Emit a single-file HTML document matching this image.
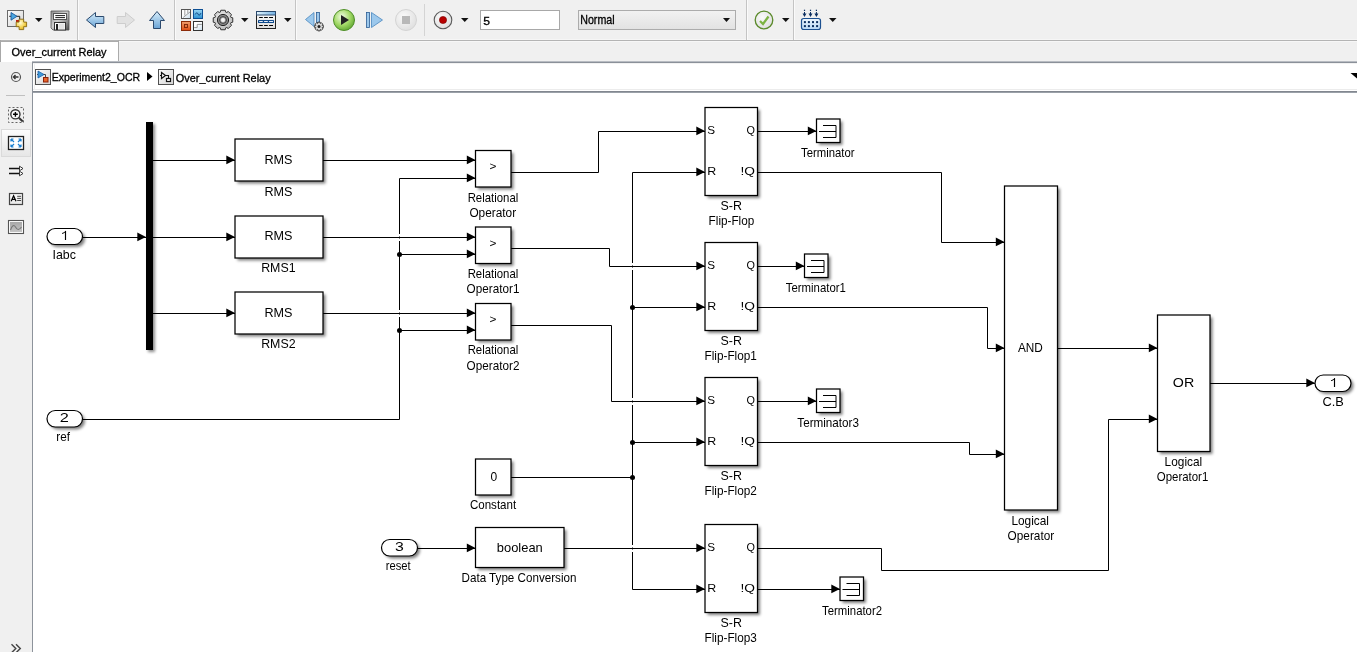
<!DOCTYPE html>
<html><head><meta charset="utf-8"><style>
html,body{margin:0;padding:0;width:1357px;height:652px;overflow:hidden;background:#f0f0f0;}
svg{display:block;font-family:"Liberation Sans", sans-serif;will-change:transform;}
</style></head><body>
<svg width="1357" height="652" viewBox="0 0 1357 652" font-family='"Liberation Sans", sans-serif'>
<defs><filter id="sh" x="-50%" y="-50%" width="200%" height="200%"><feGaussianBlur stdDeviation="1.6"/></filter></defs>
<rect x="0" y="0" width="1357" height="652" fill="#f0f0f0"/>
<rect x="0" y="39" width="1357" height="1" fill="#f6f6f6"/>
<rect x="0" y="40" width="1357" height="1" fill="#b4b4b4"/>
<rect x="0" y="41" width="1357" height="1" fill="#f7f7f7"/>
<rect x="77" y="0" width="1" height="40" fill="#c4c4c4"/>
<rect x="78" y="0" width="1" height="40" fill="#fafafa"/>
<rect x="174" y="0" width="1" height="40" fill="#c4c4c4"/>
<rect x="175" y="0" width="1" height="40" fill="#fafafa"/>
<rect x="295" y="0" width="1" height="40" fill="#c4c4c4"/>
<rect x="296" y="0" width="1" height="40" fill="#fafafa"/>
<rect x="746" y="0" width="1" height="40" fill="#c4c4c4"/>
<rect x="747" y="0" width="1" height="40" fill="#fafafa"/>
<rect x="793" y="0" width="1" height="40" fill="#c4c4c4"/>
<rect x="794" y="0" width="1" height="40" fill="#fafafa"/>
<rect x="424" y="4" width="1" height="32" fill="#d4d4d4"/>
<rect x="0" y="41" width="119" height="1" fill="#ababab"/>
<rect x="1" y="42" width="117" height="20" fill="#fff"/>
<rect x="0" y="40" width="1" height="22" fill="#a8a8a8"/>
<rect x="118" y="40" width="1" height="22" fill="#ababab"/>
<text transform="matrix(0.9968,0,0,1,11.60,56)" x="0" y="0" font-size="11" font-weight="normal" fill="#000" stroke="#000" stroke-width="0.3">Over_current Relay</text>
<rect x="32" y="61" width="1325" height="1" fill="#b8bcc2"/>
<rect x="32" y="62" width="1325" height="1" fill="#8a9099"/>
<rect x="33" y="63" width="1324" height="28" fill="#fff"/>
<rect x="33" y="63" width="1324" height="1" fill="#f2f2f2"/>
<rect x="33" y="89" width="1324" height="1" fill="#ececec"/>
<rect x="32" y="91" width="1325" height="1" fill="#82878f"/>
<rect x="32" y="92" width="1325" height="1" fill="#9aa0a8"/>
<rect x="32" y="62" width="1" height="590" fill="#8d939b"/>
<rect x="33" y="93" width="1324" height="559" fill="#fff"/>
<text transform="matrix(0.9604,0,0,1,51.64,81.3)" x="0" y="0" font-size="11" font-weight="normal" fill="#000" stroke="#000" stroke-width="0.3">Experiment2_OCR</text>
<polygon points="147,72 152.5,76.5 147,81" fill="#000"/>
<text transform="matrix(0.9947,0,0,1,175.80,81.5)" x="0" y="0" font-size="11" font-weight="normal" fill="#000" stroke="#000" stroke-width="0.3">Over_current Relay</text>
<polygon points="1350.5,73 1357,73 1357,78.5" fill="#000"/>
<rect x="35.5" y="69.5" width="15" height="15" fill="url(#nm)" stroke="#505050" stroke-width="1"/>
<rect x="158.5" y="69.5" width="15" height="15" fill="url(#nm)" stroke="#505050" stroke-width="1"/>
<path d="M37,74.5 L45.5,74.5 L45.5,77.5" stroke="#444" stroke-width="1" fill="none"/>
<polygon points="38,71 44,74.5 38,78" fill="#3e9ad8" stroke="#1c5ea8" stroke-width="0.8"/>
<rect x="43.5" y="77.5" width="4.5" height="4.5" fill="#e8642a" stroke="#8c2008" stroke-width="1"/>
<path d="M160,75.5 L168.5,75.5 L168.5,78.5" stroke="#111" stroke-width="1.1" fill="none"/>
<polygon points="161.5,72.5 165.5,75.5 161.5,78.5" fill="#fff" stroke="#111" stroke-width="1.2"/>
<rect x="166.5" y="78.5" width="4" height="3" fill="#fff" stroke="#111" stroke-width="1.2"/>
<circle cx="16" cy="77" r="4.5" fill="#f0f0f0" stroke="#555" stroke-width="1.2"/>
<path d="M13.5,77 L18.5,77 M15.5,75 L13.5,77 L15.5,79" stroke="#333" stroke-width="1.4" fill="none"/>
<rect x="6" y="95" width="19" height="1" fill="#c0c0c0"/>
<rect x="8.5" y="107.5" width="15" height="15" fill="none" stroke="#666" stroke-dasharray="2,2"/>
<circle cx="15.4" cy="114.3" r="4.6" fill="#fafafa" stroke="#333" stroke-width="1.4"/>
<path d="M13,114.3 L17.8,114.3 M15.4,111.9 L15.4,116.7" stroke="#000" stroke-width="1.4"/>
<path d="M18.8,117.7 L22.8,121.5" stroke="#333" stroke-width="2"/>
<rect x="34" y="64" width="1" height="26" fill="#efefef"/>
<defs><linearGradient id="fb" x1="0" y1="0" x2="0" y2="1"><stop offset="0" stop-color="#fdfdfd"/><stop offset="1" stop-color="#e6e6e6"/></linearGradient><linearGradient id="ib" x1="0" y1="0" x2="0" y2="1"><stop offset="0" stop-color="#a8a8a8"/><stop offset="1" stop-color="#c4c4c4"/></linearGradient></defs>
<rect x="1.5" y="129.5" width="29" height="27" fill="url(#fb)" stroke="#dadada" stroke-width="1"/>
<rect x="8.5" y="136.5" width="15" height="13" fill="#fff" stroke="#222" stroke-width="1.3"/>
<path d="M11,139 L14,142 M11,139 L11,141.5 M11,139 L13.5,139 M21,139 L18,142 M21,139 L21,141.5 M21,139 L18.5,139 M11,147 L14,144 M11,147 L11,144.5 M11,147 L13.5,147 M21,147 L18,144 M21,147 L21,144.5 M21,147 L18.5,147" stroke="#1a7fd0" stroke-width="1.2" fill="none"/>
<path d="M9,168.5 L19.5,168.5 M9,173.5 L19.5,173.5" stroke="#111" stroke-width="1.3" fill="none"/>
<path d="M19.5,166.2 L23,168.5 L19.5,170.8 Z M19.5,171.2 L23,173.5 L19.5,175.8 Z" stroke="#222" stroke-width="0.9" fill="#fff"/>
<rect x="9.5" y="193.5" width="13" height="11" fill="url(#fb)" stroke="#444" stroke-width="1.2"/>
<path d="M11.2,201.2 L13.6,195.8 L16,201.2 M12.2,199.4 L15,199.4" stroke="#000" stroke-width="1.2" fill="none"/>
<path d="M17.2,196.3 L21.1,196.3 M17.2,198.4 L21.1,198.4 M17.2,200.5 L21.1,200.5" stroke="#333" stroke-width="0.9"/>
<rect x="8.5" y="220.5" width="15" height="13" fill="#fff" stroke="#555" stroke-width="1.1"/>
<rect x="10" y="222" width="12" height="10" fill="url(#ib)"/>
<path d="M10.5,230 Q13,223 15.5,227 Q18,232 21.5,227" stroke="#777" stroke-width="1.1" fill="none"/>
<path d="M11.5,644.2 L15.8,648.5 L11.5,652.8 M16,644.2 L20.3,648.5 L16,652.8" stroke="#444" stroke-width="1.4" fill="none"/>
<defs><linearGradient id="nm" x1="0" y1="0" x2="1" y2="1"><stop offset="0" stop-color="#fdfdfd"/><stop offset="1" stop-color="#d4d4d4"/></linearGradient><radialGradient id="yl" cx="40%" cy="35%" r="70%"><stop offset="0" stop-color="#fffbd8"/><stop offset="0.6" stop-color="#f4d455"/><stop offset="1" stop-color="#d9a820"/></radialGradient><linearGradient id="sv" x1="0" y1="0" x2="1" y2="1"><stop offset="0" stop-color="#8c8c8c"/><stop offset="0.45" stop-color="#cfcfcf"/><stop offset="1" stop-color="#4a4a4a"/></linearGradient><radialGradient id="gg" cx="45%" cy="40%" r="65%"><stop offset="0" stop-color="#f6f6f6"/><stop offset="1" stop-color="#b4b4b4"/></radialGradient></defs>
<rect x="7.5" y="10.5" width="16" height="16" fill="url(#nm)" stroke="#6a6a6a" stroke-width="1"/>
<path d="M9.2,16.3 L19.7,16.3 L19.7,19" stroke="#222" stroke-width="1" fill="none"/>
<polygon points="11,12.5 17,16.3 11,20.2" fill="#4aa6e0" stroke="#1d5a9a" stroke-width="0.9"/>
<rect x="16" y="20" width="3" height="2" fill="#c02010"/>
<path d="M19.1,19.2 h4.6 v2.9 h2.9 v4.6 h-2.9 v2.9 h-4.6 v-2.9 h-2.9 v-4.6 h2.9 z" fill="url(#yl)" stroke="#8a6a10" stroke-width="0.9"/>
<polygon points="35,18 42.5,18 38.75,22" fill="#111"/>
<path d="M51,11 L69,11 L69,30 L53,30 L51,28 Z" fill="url(#sv)" stroke="#505050" stroke-width="0.8"/>
<rect x="53.5" y="13.5" width="13" height="6" fill="#fff" stroke="#555" stroke-width="1"/>
<path d="M55.3,15.6 L65,15.6 M55.3,17.6 L65,17.6" stroke="#000" stroke-width="0.9"/>
<rect x="54.5" y="22.5" width="11" height="7.5" fill="#fff" stroke="#333" stroke-width="1"/>
<rect x="58.5" y="23.5" width="6" height="5.5" fill="#e2e2e2"/>
<rect x="56" y="24" width="2" height="6" fill="#222"/>
<defs><linearGradient id="ab" x1="0" y1="0" x2="0" y2="1"><stop offset="0" stop-color="#d8eefb"/><stop offset="1" stop-color="#6aa4d6"/></linearGradient><linearGradient id="ah" x1="0" y1="0" x2="1" y2="0"><stop offset="0" stop-color="#d8eefb"/><stop offset="1" stop-color="#7ab2de"/></linearGradient></defs>
<path d="M86.5,20 L95.5,12.5 L95.5,16.5 L103.8,16.5 L103.8,23.5 L95.5,23.5 L95.5,27.5 Z" fill="url(#ab)" stroke="#2c4a6e" stroke-width="1"/>
<path d="M134.5,20 L125.5,12.5 L125.5,16.5 L117.2,16.5 L117.2,23.5 L125.5,23.5 L125.5,27.5 Z" fill="#e2e2e2" stroke="#cdcdcd" stroke-width="1"/>
<path d="M157,11.5 L164.5,20.5 L160.5,20.5 L160.5,28.5 L153.5,28.5 L153.5,20.5 L149.5,20.5 Z" fill="url(#ab)" stroke="#2c4a6e" stroke-width="1"/>
<defs><linearGradient id="l1" x1="0" y1="0" x2="1" y2="1"><stop offset="0.4" stop-color="#ffffff"/><stop offset="1" stop-color="#c8dcec"/></linearGradient><linearGradient id="l2" x1="0" y1="0" x2="0" y2="1"><stop offset="0" stop-color="#9ad6f4"/><stop offset="1" stop-color="#2a8fd0"/></linearGradient><linearGradient id="l3" x1="0" y1="0" x2="0" y2="1"><stop offset="0" stop-color="#f0a070"/><stop offset="1" stop-color="#e04c12"/></linearGradient></defs>
<rect x="181.5" y="9.5" width="9" height="9" fill="url(#l1)" stroke="#555" stroke-width="1"/>
<path d="M183.2,17.5 L190,12 M184.8,10 L184.8,15.5 M187.8,10 L187.8,13.3" stroke="#888" stroke-width="0.8"/>
<rect x="193.5" y="9.5" width="9" height="9" fill="url(#l2)" stroke="#0d4f94" stroke-width="1"/>
<path d="M195.2,14.5 Q196.5,11.5 197.8,13.5 Q199,17 200.5,13.8 L201,13" stroke="#0b3f7a" stroke-width="0.9" fill="none"/>
<rect x="181.5" y="21.5" width="9" height="9" fill="url(#l3)" stroke="#8c2c0a" stroke-width="1"/>
<rect x="184.5" y="24.5" width="3" height="3" fill="none" stroke="#7a2206" stroke-width="0.9"/>
<rect x="193.5" y="21.5" width="9" height="9" fill="url(#l1)" stroke="#333" stroke-width="1"/>
<path d="M194.2,27.6 L197.2,27.6 L197.2,24.4 L201.8,24.4" stroke="#888" stroke-width="0.9" fill="none"/>
<polygon points="220.11,12.33 220.82,10.24 225.18,10.24 225.89,12.33 226.38,12.53 228.36,11.56 231.44,14.64 230.47,16.62 230.67,17.11 232.76,17.82 232.76,22.18 230.67,22.89 230.47,23.38 231.44,25.36 228.36,28.44 226.38,27.47 225.89,27.67 225.18,29.76 220.82,29.76 220.11,27.67 219.62,27.47 217.64,28.44 214.56,25.36 215.53,23.38 215.33,22.89 213.24,22.18 213.24,17.82 215.33,17.11 215.53,16.62 214.56,14.64 217.64,11.56 219.62,12.53" fill="url(#gg)" stroke="#333" stroke-width="1"/>
<circle cx="223" cy="20" r="5.6" fill="#8a8a8a" stroke="#222" stroke-width="1"/>
<circle cx="223" cy="20" r="3.4" fill="#aaa" stroke="#333" stroke-width="0.9"/>
<circle cx="223" cy="20" r="2" fill="#f4f4f4"/>
<polygon points="241,18 248.5,18 244.75,22" fill="#111"/>
<defs><linearGradient id="me" x1="0" y1="0" x2="1" y2="0"><stop offset="0" stop-color="#e4f6fe"/><stop offset="1" stop-color="#74b2e4"/></linearGradient><linearGradient id="mb" x1="0" y1="0" x2="0" y2="1"><stop offset="0" stop-color="#ffffff"/><stop offset="1" stop-color="#dcdcdc"/></linearGradient></defs>
<rect x="256.5" y="11.5" width="19" height="17" fill="url(#mb)" stroke="#222" stroke-width="1"/>
<rect x="256.5" y="11.5" width="19" height="3.5" fill="url(#me)" stroke="#2c4a6e" stroke-width="1"/>
<path d="M259.2,17.5 L262.8,17.5 M264.1,17.5 L267.8,17.5 M269.1,17.5 L273,17.5 M259.2,25.5 L262.8,25.5 M264.1,25.5 L267.8,25.5 M269.1,25.5 L273,25.5" stroke="#000" stroke-width="1.1"/>
<rect x="258" y="20" width="16" height="3" rx="0.6" fill="#0f4a8c"/>
<path d="M259.2,21.5 L262.8,21.5 M264.1,21.5 L267.8,21.5 M269.1,21.5 L273,21.5" stroke="#e6eef8" stroke-width="1"/>
<polygon points="284,18 291.5,18 287.75,22" fill="#111"/>
<polygon points="305.5,19.5 314,12.5 314,26.5" fill="#9cc8ec" stroke="#4a86be" stroke-width="0.8"/>
<rect x="316.5" y="12.5" width="3" height="10" fill="#9cc8ec" stroke="#2c5e94" stroke-width="0.8"/>
<polygon points="317.71,23.46 317.89,22.14 320.11,22.14 320.29,23.46 320.24,23.44 321.30,22.63 322.87,24.20 322.06,25.26 322.04,25.21 323.36,25.39 323.36,27.61 322.04,27.79 322.06,27.74 322.87,28.80 321.30,30.37 320.24,29.56 320.29,29.54 320.11,30.86 317.89,30.86 317.71,29.54 317.76,29.56 316.70,30.37 315.13,28.80 315.94,27.74 315.96,27.79 314.64,27.61 314.64,25.39 315.96,25.21 315.94,25.26 315.13,24.20 316.70,22.63 317.76,23.44" fill="#d8d8d8" stroke="#333" stroke-width="0.9"/>
<circle cx="319" cy="26.5" r="1.5" fill="#222"/>
<defs><radialGradient id="gr" cx="40%" cy="35%" r="70%"><stop offset="0" stop-color="#f2fbe6"/><stop offset="0.55" stop-color="#a4da68"/><stop offset="1" stop-color="#5ea530"/></radialGradient><radialGradient id="gy" cx="40%" cy="35%" r="70%"><stop offset="0" stop-color="#fafafa"/><stop offset="1" stop-color="#dedede"/></radialGradient></defs>
<circle cx="344" cy="20" r="10.5" fill="url(#gr)" stroke="#4f8f28" stroke-width="1"/>
<polygon points="341,15 349,20 341,25" fill="#222"/>
<rect x="366.5" y="12.5" width="3" height="15" fill="#9cc8ec" stroke="#2c5e94" stroke-width="0.8"/>
<polygon points="371.5,12.5 382.5,20 371.5,27.5" fill="#9cc8ec" stroke="#4a86be" stroke-width="0.8"/>
<circle cx="406" cy="20" r="10.5" fill="url(#gy)" stroke="#d4d4d4" stroke-width="1"/>
<rect x="402" y="16" width="8" height="8" fill="#b8b8b8"/>
<circle cx="443" cy="20" r="8.8" fill="url(#gy)" stroke="#5a5a5a" stroke-width="1.1"/>
<circle cx="443" cy="20" r="3.6" fill="#b80000" stroke="#700" stroke-width="0.6"/>
<polygon points="461,18 468.5,18 464.75,22" fill="#111"/>
<rect x="480.5" y="10.5" width="79" height="19" fill="#fff" stroke="#a8a8a8" stroke-width="1"/>
<text transform="matrix(1.0600,0,0,1,483.24,24.5)" x="0" y="0" font-size="11.5" font-weight="normal" fill="#000" stroke="#000" stroke-width="0.3">5</text>
<defs><linearGradient id="cb" x1="0" y1="0" x2="0" y2="1"><stop offset="0" stop-color="#f2f2f2"/><stop offset="1" stop-color="#e2e2e2"/></linearGradient></defs>
<rect x="578.5" y="10.5" width="157" height="19" fill="url(#cb)" stroke="#acacac" stroke-width="1"/>
<text transform="matrix(0.8892,0,0,1,580.21,24.3)" x="0" y="0" font-size="12" font-weight="normal" fill="#000" stroke="#000" stroke-width="0.3">Normal</text>
<polygon points="723,18 730,18 726.5,22" fill="#111"/>
<circle cx="764" cy="20" r="8.8" fill="url(#gy)" stroke="#5a8a2a" stroke-width="1.3"/>
<path d="M760,21 L763,24 L768.5,16.5" stroke="#7cb342" stroke-width="2.2" fill="none"/>
<polygon points="782,18 789.5,18 785.75,22" fill="#111"/>
<defs><linearGradient id="lb" x1="0" y1="0" x2="0" y2="1"><stop offset="0" stop-color="#eef6fd"/><stop offset="1" stop-color="#b9d8f4"/></linearGradient></defs>
<rect x="801.5" y="18.5" width="19" height="11" rx="2.2" fill="url(#lb)" stroke="#1c5090" stroke-width="1.2"/>
<rect x="803.9" y="21.1" width="2" height="2" fill="#0d2f60"/>
<rect x="803.9" y="25.1" width="2" height="2" fill="#0d2f60"/>
<rect x="807.9" y="21.1" width="2" height="2" fill="#0d2f60"/>
<rect x="807.9" y="25.1" width="2" height="2" fill="#0d2f60"/>
<rect x="812" y="21.1" width="2" height="2" fill="#0d2f60"/>
<rect x="812" y="25.1" width="2" height="2" fill="#0d2f60"/>
<rect x="816.1" y="21.1" width="2" height="2" fill="#0d2f60"/>
<rect x="816.1" y="25.1" width="2" height="2" fill="#0d2f60"/>
<rect x="803.9" y="9.7" width="1.2" height="1.3" fill="#0d2f60"/>
<path d="M804.5,12 L804.5,15" stroke="#0d2f60" stroke-width="1"/>
<polygon points="802.5,13.6 806.5,13.6 804.5,17" fill="#0d2f60"/>
<rect x="809.9" y="9.7" width="1.2" height="1.3" fill="#0d2f60"/>
<path d="M810.5,12 L810.5,15" stroke="#0d2f60" stroke-width="1"/>
<polygon points="808.5,13.6 812.5,13.6 810.5,17" fill="#0d2f60"/>
<rect x="815.8" y="9.7" width="1.2" height="1.3" fill="#0d2f60"/>
<path d="M816.4,12 L816.4,15" stroke="#0d2f60" stroke-width="1"/>
<polygon points="814.4,13.6 818.4,13.6 816.4,17" fill="#0d2f60"/>
<polygon points="829,18 836.5,18 832.75,22" fill="#111"/>
<path d="M82.5,237.5 L146,237.5" fill="none" stroke="#000" stroke-width="1.0"/>
<polygon points="146,236.9 137.3,232.6 137.3,241.20000000000002" fill="#000"/>
<path d="M153,160.5 L235,160.5" fill="none" stroke="#000" stroke-width="1.0"/>
<polygon points="235,159.9 226.3,155.6 226.3,164.20000000000002" fill="#000"/>
<path d="M153,237.5 L235,237.5" fill="none" stroke="#000" stroke-width="1.0"/>
<polygon points="235,236.9 226.3,232.6 226.3,241.20000000000002" fill="#000"/>
<path d="M153,313.5 L235,313.5" fill="none" stroke="#000" stroke-width="1.0"/>
<polygon points="235,312.9 226.3,308.59999999999997 226.3,317.2" fill="#000"/>
<path d="M323,160.5 L475.5,160.5" fill="none" stroke="#000" stroke-width="1.0"/>
<polygon points="475.5,159.9 466.8,155.6 466.8,164.20000000000002" fill="#000"/>
<path d="M323,237.5 L475.5,237.5" fill="none" stroke="#000" stroke-width="1.0"/>
<polygon points="475.5,236.9 466.8,232.6 466.8,241.20000000000002" fill="#000"/>
<path d="M323,313.5 L475.5,313.5" fill="none" stroke="#000" stroke-width="1.0"/>
<polygon points="475.5,312.9 466.8,308.59999999999997 466.8,317.2" fill="#000"/>
<path d="M82.5,419.5 L399.5,419.5 L399.5,178.5 L475.5,178.5" fill="none" stroke="#000" stroke-width="1.0"/>
<polygon points="475.5,177.9 466.8,173.6 466.8,182.20000000000002" fill="#000"/>
<path d="M399.5,254.5 L475.5,254.5" fill="none" stroke="#000" stroke-width="1.0"/>
<polygon points="475.5,253.9 466.8,249.6 466.8,258.2" fill="#000"/>
<circle cx="399.5" cy="254.5" r="2.5" fill="#000"/>
<path d="M399.5,330.5 L475.5,330.5" fill="none" stroke="#000" stroke-width="1.0"/>
<polygon points="475.5,329.9 466.8,325.59999999999997 466.8,334.2" fill="#000"/>
<circle cx="399.5" cy="330.5" r="2.5" fill="#000"/>
<rect x="398.0" y="234.0" width="3" height="2.5" fill="#fff"/>
<rect x="398.0" y="238.5" width="3" height="2.5" fill="#fff"/>
<rect x="398.0" y="310.0" width="3" height="2.5" fill="#fff"/>
<rect x="398.0" y="314.5" width="3" height="2.5" fill="#fff"/>
<path d="M380,237.5 L420,237.5" fill="none" stroke="#000" stroke-width="1.0"/>
<path d="M380,313.5 L420,313.5" fill="none" stroke="#000" stroke-width="1.0"/>
<path d="M511,172.5 L598.5,172.5 L598.5,131.5 L705,131.5" fill="none" stroke="#000" stroke-width="1.0"/>
<polygon points="705,130.9 696.3,126.60000000000001 696.3,135.20000000000002" fill="#000"/>
<path d="M511,248.5 L609.5,248.5 L609.5,266.5 L705,266.5" fill="none" stroke="#000" stroke-width="1.0"/>
<polygon points="705,265.9 696.3,261.59999999999997 696.3,270.2" fill="#000"/>
<path d="M511,325.5 L611.5,325.5 L611.5,401.5 L705,401.5" fill="none" stroke="#000" stroke-width="1.0"/>
<polygon points="705,400.9 696.3,396.59999999999997 696.3,405.2" fill="#000"/>
<path d="M705,172.5 L632.5,172.5 L632.5,589.5 L705,589.5" fill="none" stroke="#000" stroke-width="1.0"/>
<polygon points="705,171.9 696.3,167.6 696.3,176.20000000000002" fill="#000"/>
<polygon points="705,588.9 696.3,584.6 696.3,593.1999999999999" fill="#000"/>
<path d="M632.5,307.5 L705,307.5" fill="none" stroke="#000" stroke-width="1.0"/>
<polygon points="705,306.9 696.3,302.59999999999997 696.3,311.2" fill="#000"/>
<circle cx="632.5" cy="307.5" r="2.5" fill="#000"/>
<path d="M632.5,442.5 L705,442.5" fill="none" stroke="#000" stroke-width="1.0"/>
<polygon points="705,441.9 696.3,437.59999999999997 696.3,446.2" fill="#000"/>
<circle cx="632.5" cy="442.5" r="2.5" fill="#000"/>
<path d="M511,477.5 L632.5,477.5" fill="none" stroke="#000" stroke-width="1.0"/>
<circle cx="632.5" cy="477.5" r="2.5" fill="#000"/>
<path d="M417.5,548.5 L475.5,548.5" fill="none" stroke="#000" stroke-width="1.0"/>
<polygon points="475.5,547.9 466.8,543.6 466.8,552.1999999999999" fill="#000"/>
<path d="M564,548.5 L705,548.5" fill="none" stroke="#000" stroke-width="1.0"/>
<polygon points="705,547.9 696.3,543.6 696.3,552.1999999999999" fill="#000"/>
<rect x="631.0" y="263.0" width="3" height="2.5" fill="#fff"/>
<rect x="631.0" y="267.5" width="3" height="2.5" fill="#fff"/>
<rect x="631.0" y="398.0" width="3" height="2.5" fill="#fff"/>
<rect x="631.0" y="402.5" width="3" height="2.5" fill="#fff"/>
<rect x="631.0" y="545.0" width="3" height="2.5" fill="#fff"/>
<rect x="631.0" y="549.5" width="3" height="2.5" fill="#fff"/>
<path d="M620,266.5 L645,266.5" fill="none" stroke="#000" stroke-width="1.0"/>
<path d="M620,401.5 L645,401.5" fill="none" stroke="#000" stroke-width="1.0"/>
<path d="M620,548.5 L645,548.5" fill="none" stroke="#000" stroke-width="1.0"/>
<path d="M757.5,131.5 L816.5,131.5" fill="none" stroke="#000" stroke-width="1.0"/>
<polygon points="816.5,130.9 807.8,126.60000000000001 807.8,135.20000000000002" fill="#000"/>
<path d="M757.5,266.5 L804.5,266.5" fill="none" stroke="#000" stroke-width="1.0"/>
<polygon points="804.5,265.9 795.8,261.59999999999997 795.8,270.2" fill="#000"/>
<path d="M757.5,401.5 L816.5,401.5" fill="none" stroke="#000" stroke-width="1.0"/>
<polygon points="816.5,400.9 807.8,396.59999999999997 807.8,405.2" fill="#000"/>
<path d="M757.5,589.5 L840,589.5" fill="none" stroke="#000" stroke-width="1.0"/>
<polygon points="840,588.9 831.3,584.6 831.3,593.1999999999999" fill="#000"/>
<path d="M757.5,172.5 L941.5,172.5 L941.5,242.5 L1004.5,242.5" fill="none" stroke="#000" stroke-width="1.0"/>
<polygon points="1004.5,241.9 995.8,237.6 995.8,246.20000000000002" fill="#000"/>
<path d="M757.5,307.5 L987.5,307.5 L987.5,348.5 L1004.5,348.5" fill="none" stroke="#000" stroke-width="1.0"/>
<polygon points="1004.5,347.9 995.8,343.59999999999997 995.8,352.2" fill="#000"/>
<path d="M757.5,442.5 L969.5,442.5 L969.5,454.5 L1004.5,454.5" fill="none" stroke="#000" stroke-width="1.0"/>
<polygon points="1004.5,453.9 995.8,449.59999999999997 995.8,458.2" fill="#000"/>
<path d="M757.5,548.5 L881.5,548.5 L881.5,570.5 L1108.5,570.5 L1108.5,419.5 L1157.5,419.5" fill="none" stroke="#000" stroke-width="1.0"/>
<polygon points="1157.5,418.9 1148.8,414.59999999999997 1148.8,423.2" fill="#000"/>
<path d="M1057.5,348.5 L1157.5,348.5" fill="none" stroke="#000" stroke-width="1.0"/>
<polygon points="1157.5,347.9 1148.8,343.59999999999997 1148.8,352.2" fill="#000"/>
<path d="M1210,383.5 L1315,383.5" fill="none" stroke="#000" stroke-width="1.0"/>
<polygon points="1315,382.9 1306.3,378.59999999999997 1306.3,387.2" fill="#000"/>
<rect x="49.5" y="231.0" width="35.5" height="16.0" rx="8.0" fill="#000" opacity="0.5" filter="url(#sh)"/>
<rect x="47" y="228.5" width="35.5" height="16.0" rx="8.0" fill="#fff" stroke="#000" stroke-width="1.2"/>
<path d="M65.5,231 L65.5,240" stroke="#000" stroke-width="1.15" fill="none"/>
<path d="M62.1,233.5 Q64.3,233.1 65.8,231.1" stroke="#000" stroke-width="1.0" fill="none"/>
<text transform="matrix(1.0333,0,0,1,52.47,259)" x="0" y="0" font-size="12" font-weight="normal" fill="#000">Iabc</text>
<rect x="49.5" y="413.0" width="35.5" height="16.5" rx="8.25" fill="#000" opacity="0.5" filter="url(#sh)"/>
<rect x="47" y="410.5" width="35.5" height="16.5" rx="8.25" fill="#fff" stroke="#000" stroke-width="1.2"/>
<text transform="matrix(1.3600,0,0,1,59.64,422)" x="0" y="0" font-size="12" font-weight="normal" fill="#000">2</text>
<text transform="matrix(0.9769,0,0,1,56.32,441)" x="0" y="0" font-size="12" font-weight="normal" fill="#000">ref</text>
<rect x="384.0" y="542.0" width="36.0" height="16.5" rx="8.25" fill="#000" opacity="0.5" filter="url(#sh)"/>
<rect x="381.5" y="539.5" width="36.0" height="16.5" rx="8.25" fill="#fff" stroke="#000" stroke-width="1.2"/>
<text transform="matrix(1.3200,0,0,1,395.08,551)" x="0" y="0" font-size="12" font-weight="normal" fill="#000">3</text>
<text transform="matrix(0.9346,0,0,1,385.67,569.5)" x="0" y="0" font-size="12" font-weight="normal" fill="#000">reset</text>
<rect x="1317.5" y="377.5" width="36" height="16.5" rx="8.25" fill="#000" opacity="0.5" filter="url(#sh)"/>
<rect x="1315" y="375" width="36" height="16.5" rx="8.25" fill="#fff" stroke="#000" stroke-width="1.2"/>
<path d="M1334.5,378.2 L1334.5,387" stroke="#000" stroke-width="1.15" fill="none"/>
<path d="M1331.1,380.7 Q1333.3,380.3 1334.8,378.3" stroke="#000" stroke-width="1.0" fill="none"/>
<text transform="matrix(1.0667,0,0,1,1322.43,406)" x="0" y="0" font-size="12" font-weight="normal" fill="#000">C.B</text>
<rect x="148" y="124" width="7" height="228" fill="#000" opacity="0.45" filter="url(#sh)"/>
<rect x="146" y="122" width="7" height="228" fill="#000"/>
<rect x="237.5" y="141.5" width="88" height="42.0" fill="#000" opacity="0.5" filter="url(#sh)"/>
<rect x="235" y="139.0" width="88" height="42.0" fill="#fff" stroke="#000" stroke-width="1.25"/>
<text transform="matrix(1.0520,0,0,1,264.45,164.2)" x="0" y="0" font-size="12" font-weight="normal" fill="#000">RMS</text>
<text transform="matrix(1.0520,0,0,1,264.45,196.0)" x="0" y="0" font-size="12" font-weight="normal" fill="#000">RMS</text>
<rect x="237.5" y="218.5" width="88" height="42.0" fill="#000" opacity="0.5" filter="url(#sh)"/>
<rect x="235" y="216.0" width="88" height="42.0" fill="#fff" stroke="#000" stroke-width="1.25"/>
<text transform="matrix(1.0520,0,0,1,264.45,240.2)" x="0" y="0" font-size="12" font-weight="normal" fill="#000">RMS</text>
<text transform="matrix(1.0344,0,0,1,261.17,272.0)" x="0" y="0" font-size="12" font-weight="normal" fill="#000">RMS1</text>
<rect x="237.5" y="294.5" width="88" height="42.0" fill="#000" opacity="0.5" filter="url(#sh)"/>
<rect x="235" y="292.0" width="88" height="42.0" fill="#fff" stroke="#000" stroke-width="1.25"/>
<text transform="matrix(1.0520,0,0,1,264.45,317.2)" x="0" y="0" font-size="12" font-weight="normal" fill="#000">RMS</text>
<text transform="matrix(1.0344,0,0,1,261.17,348.0)" x="0" y="0" font-size="12" font-weight="normal" fill="#000">RMS2</text>
<rect x="478.0" y="153.0" width="35.5" height="36.5" fill="#000" opacity="0.5" filter="url(#sh)"/>
<rect x="475.5" y="150.5" width="35.5" height="36.5" fill="#fff" stroke="#000" stroke-width="1.25"/>
<text transform="matrix(1.1800,0,0,1,489.42,170.0)" x="0" y="0" font-size="10" font-weight="normal" fill="#000">&gt;</text>
<text transform="matrix(0.9500,0,0,1,467.65,202)" x="0" y="0" font-size="12" font-weight="normal" fill="#000">Relational</text>
<text transform="matrix(0.9870,0,0,1,469.41,217)" x="0" y="0" font-size="12" font-weight="normal" fill="#000">Operator</text>
<rect x="478.0" y="229.5" width="35.5" height="36.5" fill="#000" opacity="0.5" filter="url(#sh)"/>
<rect x="475.5" y="227" width="35.5" height="36.5" fill="#fff" stroke="#000" stroke-width="1.25"/>
<text transform="matrix(1.1800,0,0,1,489.42,246.5)" x="0" y="0" font-size="10" font-weight="normal" fill="#000">&gt;</text>
<text transform="matrix(0.9500,0,0,1,467.65,278)" x="0" y="0" font-size="12" font-weight="normal" fill="#000">Relational</text>
<text transform="matrix(0.9774,0,0,1,466.62,293)" x="0" y="0" font-size="12" font-weight="normal" fill="#000">Operator1</text>
<rect x="478.0" y="306.0" width="35.5" height="36.5" fill="#000" opacity="0.5" filter="url(#sh)"/>
<rect x="475.5" y="303.5" width="35.5" height="36.5" fill="#fff" stroke="#000" stroke-width="1.25"/>
<text transform="matrix(1.1800,0,0,1,489.42,323.0)" x="0" y="0" font-size="10" font-weight="normal" fill="#000">&gt;</text>
<text transform="matrix(0.9500,0,0,1,467.65,354)" x="0" y="0" font-size="12" font-weight="normal" fill="#000">Relational</text>
<text transform="matrix(0.9774,0,0,1,466.62,369.8)" x="0" y="0" font-size="12" font-weight="normal" fill="#000">Operator2</text>
<rect x="707.5" y="110.0" width="52.5" height="88.0" fill="#000" opacity="0.5" filter="url(#sh)"/>
<rect x="705" y="107.5" width="52.5" height="88.0" fill="#fff" stroke="#000" stroke-width="1.25"/>
<text transform="matrix(1.0667,0,0,1,707.33,134.0)" x="0" y="0" font-size="11" font-weight="normal" fill="#000">S</text>
<text transform="matrix(1.1333,0,0,1,707.27,175.0)" x="0" y="0" font-size="11" font-weight="normal" fill="#000">R</text>
<text transform="matrix(0.9875,0,0,1,746.40,134.0)" x="0" y="0" font-size="11" font-weight="normal" fill="#000">Q</text>
<text transform="matrix(1.2500,0,0,1,740.55,175.0)" x="0" y="0" font-size="11" font-weight="normal" fill="#000">!Q</text>
<text transform="matrix(1.0368,0,0,1,720.56,209.5)" x="0" y="0" font-size="12" font-weight="normal" fill="#000">S-R</text>
<text transform="matrix(0.9778,0,0,1,708.62,224.5)" x="0" y="0" font-size="12" font-weight="normal" fill="#000">Flip-Flop</text>
<rect x="707.5" y="245.0" width="52.5" height="88.0" fill="#000" opacity="0.5" filter="url(#sh)"/>
<rect x="705" y="242.5" width="52.5" height="88.0" fill="#fff" stroke="#000" stroke-width="1.25"/>
<text transform="matrix(1.0667,0,0,1,707.33,269.0)" x="0" y="0" font-size="11" font-weight="normal" fill="#000">S</text>
<text transform="matrix(1.1333,0,0,1,707.27,310.0)" x="0" y="0" font-size="11" font-weight="normal" fill="#000">R</text>
<text transform="matrix(0.9875,0,0,1,746.40,269.0)" x="0" y="0" font-size="11" font-weight="normal" fill="#000">Q</text>
<text transform="matrix(1.2500,0,0,1,740.55,310.0)" x="0" y="0" font-size="11" font-weight="normal" fill="#000">!Q</text>
<text transform="matrix(1.0368,0,0,1,720.56,344.5)" x="0" y="0" font-size="12" font-weight="normal" fill="#000">S-R</text>
<text transform="matrix(0.9827,0,0,1,704.52,359.5)" x="0" y="0" font-size="12" font-weight="normal" fill="#000">Flip-Flop1</text>
<rect x="707.5" y="380.0" width="52.5" height="88.0" fill="#000" opacity="0.5" filter="url(#sh)"/>
<rect x="705" y="377.5" width="52.5" height="88.0" fill="#fff" stroke="#000" stroke-width="1.25"/>
<text transform="matrix(1.0667,0,0,1,707.33,404.0)" x="0" y="0" font-size="11" font-weight="normal" fill="#000">S</text>
<text transform="matrix(1.1333,0,0,1,707.27,445.0)" x="0" y="0" font-size="11" font-weight="normal" fill="#000">R</text>
<text transform="matrix(0.9875,0,0,1,746.40,404.0)" x="0" y="0" font-size="11" font-weight="normal" fill="#000">Q</text>
<text transform="matrix(1.2500,0,0,1,740.55,445.0)" x="0" y="0" font-size="11" font-weight="normal" fill="#000">!Q</text>
<text transform="matrix(1.0368,0,0,1,720.56,479.5)" x="0" y="0" font-size="12" font-weight="normal" fill="#000">S-R</text>
<text transform="matrix(0.9827,0,0,1,704.52,494.5)" x="0" y="0" font-size="12" font-weight="normal" fill="#000">Flip-Flop2</text>
<rect x="707.5" y="527.0" width="52.5" height="88.0" fill="#000" opacity="0.5" filter="url(#sh)"/>
<rect x="705" y="524.5" width="52.5" height="88.0" fill="#fff" stroke="#000" stroke-width="1.25"/>
<text transform="matrix(1.0667,0,0,1,707.33,551.0)" x="0" y="0" font-size="11" font-weight="normal" fill="#000">S</text>
<text transform="matrix(1.1333,0,0,1,707.27,592.0)" x="0" y="0" font-size="11" font-weight="normal" fill="#000">R</text>
<text transform="matrix(0.9875,0,0,1,746.40,551.0)" x="0" y="0" font-size="11" font-weight="normal" fill="#000">Q</text>
<text transform="matrix(1.2500,0,0,1,740.55,592.0)" x="0" y="0" font-size="11" font-weight="normal" fill="#000">!Q</text>
<text transform="matrix(1.0368,0,0,1,720.56,626.5)" x="0" y="0" font-size="12" font-weight="normal" fill="#000">S-R</text>
<text transform="matrix(0.9827,0,0,1,704.52,641.5)" x="0" y="0" font-size="12" font-weight="normal" fill="#000">Flip-Flop3</text>
<rect x="819.0" y="121.5" width="23.5" height="23.5" fill="#000" opacity="0.5" filter="url(#sh)"/>
<rect x="816.5" y="119" width="23.5" height="23.5" fill="#fff" stroke="#000" stroke-width="1.25"/>
<path d="M823.0,125.5 L836.0,125.5 L836.0,137.5 L823.0,137.5" fill="none" stroke="#000" stroke-width="1.0"/>
<path d="M819.0,131.5 L836.0,131.5" fill="none" stroke="#000" stroke-width="1.0"/>
<text transform="matrix(0.9439,0,0,1,801.00,157)" x="0" y="0" font-size="12" font-weight="normal" fill="#000">Terminator</text>
<rect x="807.0" y="256.5" width="23.5" height="23.5" fill="#000" opacity="0.5" filter="url(#sh)"/>
<rect x="804.5" y="254" width="23.5" height="23.5" fill="#fff" stroke="#000" stroke-width="1.25"/>
<path d="M811.0,260.5 L824.0,260.5 L824.0,272.5 L811.0,272.5" fill="none" stroke="#000" stroke-width="1.0"/>
<path d="M807.0,266.5 L824.0,266.5" fill="none" stroke="#000" stroke-width="1.0"/>
<text transform="matrix(0.9492,0,0,1,785.80,292)" x="0" y="0" font-size="12" font-weight="normal" fill="#000">Terminator1</text>
<rect x="819.0" y="391.5" width="23.5" height="23.5" fill="#000" opacity="0.5" filter="url(#sh)"/>
<rect x="816.5" y="389" width="23.5" height="23.5" fill="#fff" stroke="#000" stroke-width="1.25"/>
<path d="M823.0,395.5 L836.0,395.5 L836.0,407.5 L823.0,407.5" fill="none" stroke="#000" stroke-width="1.0"/>
<path d="M819.0,401.5 L836.0,401.5" fill="none" stroke="#000" stroke-width="1.0"/>
<text transform="matrix(0.9746,0,0,1,797.30,427)" x="0" y="0" font-size="12" font-weight="normal" fill="#000">Terminator3</text>
<rect x="842.5" y="579.5" width="23.5" height="23.5" fill="#000" opacity="0.5" filter="url(#sh)"/>
<rect x="840" y="577" width="23.5" height="23.5" fill="#fff" stroke="#000" stroke-width="1.25"/>
<path d="M846.5,583.5 L859.5,583.5 L859.5,595.5 L846.5,595.5" fill="none" stroke="#000" stroke-width="1.0"/>
<path d="M842.5,589.5 L859.5,589.5" fill="none" stroke="#000" stroke-width="1.0"/>
<text transform="matrix(0.9460,0,0,1,822.10,615)" x="0" y="0" font-size="12" font-weight="normal" fill="#000">Terminator2</text>
<rect x="478.0" y="461.5" width="35.5" height="36" fill="#000" opacity="0.5" filter="url(#sh)"/>
<rect x="475.5" y="459" width="35.5" height="36" fill="#fff" stroke="#000" stroke-width="1.25"/>
<text transform="matrix(1.0000,0,0,1,490.40,481)" x="0" y="0" font-size="12" font-weight="normal" fill="#000">0</text>
<text transform="matrix(0.9638,0,0,1,469.94,509)" x="0" y="0" font-size="12" font-weight="normal" fill="#000">Constant</text>
<rect x="478.0" y="530.0" width="88.5" height="40.0" fill="#000" opacity="0.5" filter="url(#sh)"/>
<rect x="475.5" y="527.5" width="88.5" height="40.0" fill="#fff" stroke="#000" stroke-width="1.25"/>
<text transform="matrix(1.0756,0,0,1,496.82,552)" x="0" y="0" font-size="12" font-weight="normal" fill="#000">boolean</text>
<text transform="matrix(0.9701,0,0,1,461.53,582)" x="0" y="0" font-size="12" font-weight="normal" fill="#000">Data Type Conversion</text>
<rect x="1007.0" y="188.5" width="53.0" height="324" fill="#000" opacity="0.5" filter="url(#sh)"/>
<rect x="1004.5" y="186" width="53.0" height="324" fill="#fff" stroke="#000" stroke-width="1.25"/>
<text transform="matrix(0.9840,0,0,1,1017.90,352)" x="0" y="0" font-size="12" font-weight="normal" fill="#000">AND</text>
<text transform="matrix(0.9889,0,0,1,1011.41,525)" x="0" y="0" font-size="12" font-weight="normal" fill="#000">Logical</text>
<text transform="matrix(0.9848,0,0,1,1007.62,540)" x="0" y="0" font-size="12" font-weight="normal" fill="#000">Operator</text>
<rect x="1160.0" y="317.5" width="52.5" height="136.5" fill="#000" opacity="0.5" filter="url(#sh)"/>
<rect x="1157.5" y="315" width="52.5" height="136.5" fill="#fff" stroke="#000" stroke-width="1.25"/>
<text transform="matrix(1.1875,0,0,1,1172.81,387.4)" x="0" y="0" font-size="12" font-weight="normal" fill="#000">OR</text>
<text transform="matrix(0.9889,0,0,1,1164.61,466)" x="0" y="0" font-size="12" font-weight="normal" fill="#000">Logical</text>
<text transform="matrix(0.9547,0,0,1,1156.75,481)" x="0" y="0" font-size="12" font-weight="normal" fill="#000">Operator1</text>
</svg></body></html>
